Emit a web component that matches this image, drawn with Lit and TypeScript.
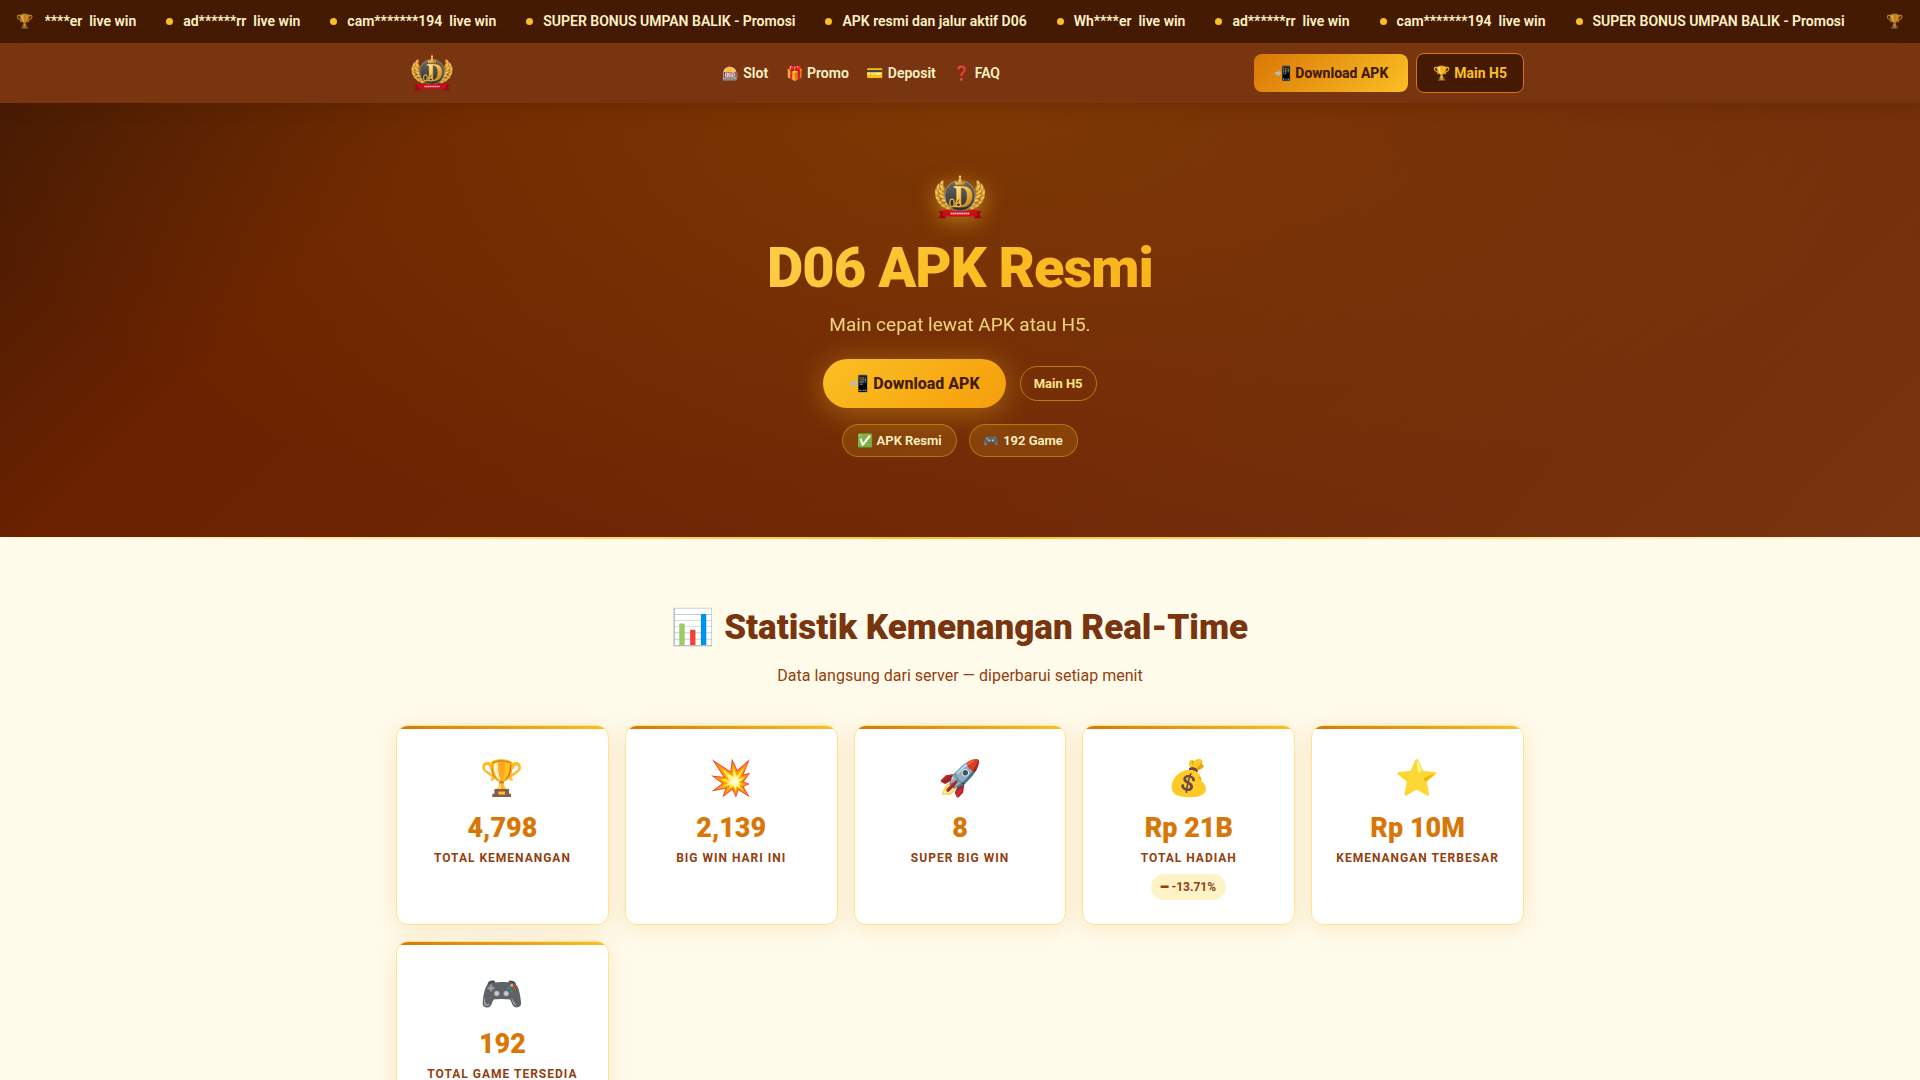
import { LitElement, html, css, svg } from "lit";
import { customElement } from "lit/decorators.js";

interface Stat {
  icon: string;
  value: string;
  label: string;
  trend?: string;
}

const NEWS = [
  "Wh****er \u00a0live win",
  "ad******rr \u00a0live win",
  "cam*******194 \u00a0live win",
  "SUPER BONUS UMPAN BALIK - Promosi",
  "APK resmi dan jalur aktif D06",
];

const LINKS = ["🎰 Slot", "🎁 Promo", "💳 Deposit", "❓ FAQ"];

const STATS: Stat[] = [
  { icon: "🏆", value: "4,798", label: "Total Kemenangan" },
  { icon: "💥", value: "2,139", label: "Big Win Hari Ini" },
  { icon: "🚀", value: "8", label: "Super Big Win" },
  { icon: "💰", value: "Rp 21B", label: "Total Hadiah", trend: "-13.71%" },
  { icon: "⭐", value: "Rp 10M", label: "Kemenangan Terbesar" },
  { icon: "🎮", value: "192", label: "Total Game Tersedia" },
];

// Leaves of one laurel branch: x, y, rotation in degrees.
const LEAVES = [
  [31, 76, 68], [21, 71, 56], [13, 63, 42], [8, 54, 28], [6, 43, 14], [9, 32, -4], [16, 23, -18],
  [34, 67, 100], [26, 60, 84], [20, 51, 66], [17, 41, 50], [19, 31, 30],
];

@customElement("brand-logo")
export class BrandLogo extends LitElement {
  static styles = css`
    :host { display: block; }
    .mark { display: block; width: 100%; height: 100%; }
  `;

  private branch() {
    return LEAVES.map(
      ([x, y, r]) => svg`<path d="M0 9C-7 4-6-5 0-12C6-5 7 4 0 9Z" transform="translate(${x} ${y}) rotate(${-r})"
        fill="url(#gold)" stroke="#a05c10" stroke-width="1"/>`
    );
  }

  render() {
    return html`<svg class="mark" viewBox="0 0 120 104" role="img" aria-label="D06">
      <defs>
        <linearGradient id="gold" x1="0" y1="0" x2="1" y2="1">
          <stop offset="0" stop-color="#fff3b0"/>
          <stop offset=".45" stop-color="#f5c04a"/>
          <stop offset="1" stop-color="#b8741a"/>
        </linearGradient>
        <linearGradient id="steel" x1="0" y1="0" x2="0" y2="1">
          <stop offset="0" stop-color="#6a6a66"/>
          <stop offset="1" stop-color="#2a2d2f"/>
        </linearGradient>
      </defs>
      <g>${this.branch()}</g>
      <g transform="translate(120 0) scale(-1 1)">${this.branch()}</g>
      <circle cx="60" cy="49" r="36" fill="url(#steel)" stroke="#a39c88" stroke-width="2"/>
      <path d="M49 24L46 13L54 17L60 3L66 17L74 12L71 24Z" fill="url(#gold)" stroke="#8a5410"/>
      <circle cx="60" cy="4" r="3" fill="#ffd65a"/>
      <path fill-rule="evenodd" d="M45 26H65C82 26 90 36 90 50C90 65 80 76 64 76H45V72L51 70V32L45 30ZM63 31V71C72 71 76 63 76 50C76 37 72 31 63 31Z"
        fill="url(#gold)" stroke="#8a5410"/>
      <ellipse cx="41" cy="66" rx="5" ry="9" fill="#2a2d2f" stroke="#f0b93c" stroke-width="3"/>
      <path d="M60 56C52 59 49 65 51 71C53 77 61 76 61 70C61 65 54 65 51 69" fill="#2a2d2f" stroke="#f0b93c" stroke-width="3"/>
      <path d="M9 85H26V102H9L14 93Z" fill="#9c0612"/>
      <path d="M111 85H94V102H111L106 93Z" fill="#9c0612"/>
      <path d="M19 82Q60 87 101 82V97Q60 100 19 97Z" fill="#cc0c1c"/>
      <path d="M38 91H82" stroke="#f0b0a4" stroke-width="5" stroke-dasharray="4 1"/>
    </svg>`;
  }
}

@customElement("app-root")
export class AppRoot extends LitElement {
  static styles = css`
    * { box-sizing: border-box; }
    :host {
      display: block;
      height: 100vh;
      overflow: hidden;
      background: #fffbeb;
      color: #78350f;
      font-family: Roboto, "Noto Color Emoji", sans-serif;
      font-size: 16px;
      line-height: 26px;
    }
    a { color: inherit; text-decoration: none; }
    h1, h2, p { margin: 0; }

    .ticker {
      display: flex;
      align-items: center;
      gap: 12px;
      padding: 10px 16px 11px;
      background: #451a03;
    }
    .ticker-icon { font-size: 14px; line-height: 22px; opacity: 0.7; }
    .ticker-view { flex: 1; min-width: 0; overflow: hidden; display: flex; }
    .ticker-track {
      display: flex;
      flex: none;
      gap: 30px;
      margin-left: -38px;
      color: #fef3c7;
      font-size: 14px;
      font-weight: 600;
      line-height: 22px;
      white-space: nowrap;
    }
    .ticker-item { display: flex; align-items: center; gap: 10px; }
    .ticker-item::before {
      content: "";
      width: 7px;
      height: 7px;
      border-radius: 50%;
      background: #fbbf24;
    }

    .nav {
      position: relative;
      background: #78350f;
      box-shadow: 0 2px 16px rgba(69, 26, 3, 0.3);
    }
    .nav-inner, .wrap {
      width: 100%;
      max-width: 1160px;
      margin: 0 auto;
      padding: 0 16px;
    }
    .nav-inner {
      display: flex;
      align-items: center;
      justify-content: space-between;
      padding: 10px 16px;
    }
    .nav-logo { width: 72px; height: 36px; }
    .links { display: flex; gap: 18px; color: #fef3c7; font-size: 14px; font-weight: 600; line-height: 22px; }
    .actions { display: flex; align-items: center; gap: 8px; font-size: 14px; font-weight: 700; line-height: 22px; }
    .btn { border-radius: 8px; white-space: nowrap; }
    .btn-gold {
      padding: 8px 20px;
      background: linear-gradient(135deg, #d97706, #fbbf24);
      color: #451a03;
      font-weight: 800;
    }
    .btn-dark {
      padding: 8px 16px;
      background: #451a03;
      border: 1px solid #d97706;
      color: #fbbf24;
    }

    .hero {
      display: flex;
      flex-direction: column;
      align-items: center;
      padding: 72px 16px 80px;
      background:
        radial-gradient(ellipse at 50% 0%, rgba(200, 150, 6, 0.17), transparent 75%),
        linear-gradient(135deg, #451a03 0%, #6b2200 20%, #702807 60%, #78350f 100%);
      text-align: center;
    }
    .hero-logo { width: 64px; height: 44px; filter: drop-shadow(0 4px 10px rgba(251, 191, 36, 0.5)); }
    .hero-title {
      width: 100%;
      max-width: 1128px;
      margin-top: 18px;
      font-size: 56px;
      font-weight: 900;
      line-height: 62px;
      letter-spacing: -1px;
      background: linear-gradient(135deg, #fde68a, #fbbf24, #f59e0b);
      -webkit-background-clip: text;
      background-clip: text;
      color: transparent;
    }
    .hero-text { margin-top: 11px; color: #fde68a; font-size: 19px; line-height: 30px; opacity: 0.9; }
    .hero-actions { display: flex; align-items: center; gap: 14px; margin-top: 19px; }
    .pill { border-radius: 999px; white-space: nowrap; }
    .pill-gold {
      padding: 12px 26px;
      background: linear-gradient(135deg, #fbbf24, #f59e0b);
      box-shadow: 0 4px 30px rgba(251, 191, 36, 0.4);
      color: #451a03;
      font-weight: 800;
      line-height: 25px;
    }
    .pill-line {
      padding: 7px 13px;
      border: 1px solid #b97a1b;
      color: #fde68a;
      font-size: 13px;
      font-weight: 700;
      line-height: 19px;
    }
    .chips { display: flex; gap: 12px; margin-top: 16px; color: #fef3c7; font-size: 13px; font-weight: 600; line-height: 19px; }
    .chip {
      padding: 6px 14px;
      border: 1px solid rgba(251, 191, 36, 0.4);
      border-radius: 999px;
      background: rgba(251, 191, 36, 0.15);
    }
    .rule { height: 2px; background: linear-gradient(90deg, transparent, #fbbf24, transparent); }

    .stats { padding: 64px 0; }
    .stats-title {
      color: #78350f;
      font-size: 35px;
      font-weight: 900;
      line-height: 50px;
      text-align: center;
    }
    .stats-text { margin: 10px 0 36px; color: #92400e; text-align: center; }
    .grid { display: grid; grid-template-columns: repeat(auto-fit, minmax(200px, 1fr)); gap: 16px; }
    .card {
      position: relative;
      overflow: hidden;
      min-height: 200px;
      padding: 24px 16px;
      border: 1px solid #fde68a;
      border-radius: 12px;
      background: #ffffff;
      box-shadow: 0 4px 24px rgba(217, 119, 6, 0.15);
      text-align: center;
    }
    .card::before {
      content: "";
      position: absolute;
      inset: 0 0 auto;
      height: 3px;
      background: linear-gradient(90deg, #d97706, #fbbf24);
    }
    .card-icon { font-size: 35px; line-height: 58px; }
    .card-value { color: #d97706; font-size: 27px; font-weight: 900; line-height: 40px; }
    .card-label {
      color: #92400e;
      font-size: 12px;
      font-weight: 700;
      line-height: 20px;
      letter-spacing: 1px;
      text-transform: uppercase;
      white-space: nowrap;
    }
    .trend {
      display: inline-block;
      margin-top: 6px;
      padding: 3px 10px;
      border-radius: 999px;
      background: #fef3c7;
      color: #92400e;
      font-size: 12px;
      font-weight: 700;
      line-height: 20px;
    }
  `;

  render() {
    return html`
      <div class="ticker">
        <span class="ticker-icon">🏆</span>
        <div class="ticker-view">
          <div class="ticker-track">
            ${[...NEWS, ...NEWS].map((item) => html`<span class="ticker-item">${item}</span>`)}
          </div>
        </div>
        <span class="ticker-icon">🏆</span>
      </div>
      <header class="nav">
        <div class="nav-inner">
          <a href="#home"><brand-logo class="nav-logo"></brand-logo></a>
          <nav class="links">${LINKS.map((link) => html`<a href="#menu">${link}</a>`)}</nav>
          <div class="actions">
            <a class="btn btn-gold" href="#apk">📲 Download APK</a>
            <a class="btn btn-dark" href="#h5">🏆 Main H5</a>
          </div>
        </div>
      </header>
      <section class="hero">
        <brand-logo class="hero-logo"></brand-logo>
        <h1 class="hero-title">D06 APK Resmi</h1>
        <p class="hero-text">Main cepat lewat APK atau H5.</p>
        <div class="hero-actions">
          <a class="pill pill-gold" href="#apk">📲 Download APK</a>
          <a class="pill pill-line" href="#h5">Main H5</a>
        </div>
        <div class="chips">
          <span class="chip">✅ APK Resmi</span>
          <span class="chip">🎮 192 Game</span>
        </div>
      </section>
      <div class="rule"></div>
      <section class="stats">
        <div class="wrap">
          <h2 class="stats-title">📊 Statistik Kemenangan Real-Time</h2>
          <p class="stats-text">Data langsung dari server — diperbarui setiap menit</p>
          <div class="grid">
            ${STATS.map(
              (s) => html`<article class="card">
                <div class="card-icon">${s.icon}</div>
                <div class="card-value">${s.value}</div>
                <div class="card-label">${s.label}</div>
                ${s.trend ? html`<span class="trend">━ ${s.trend}</span>` : null}
              </article>`
            )}
          </div>
        </div>
      </section>
    `;
  }
}
